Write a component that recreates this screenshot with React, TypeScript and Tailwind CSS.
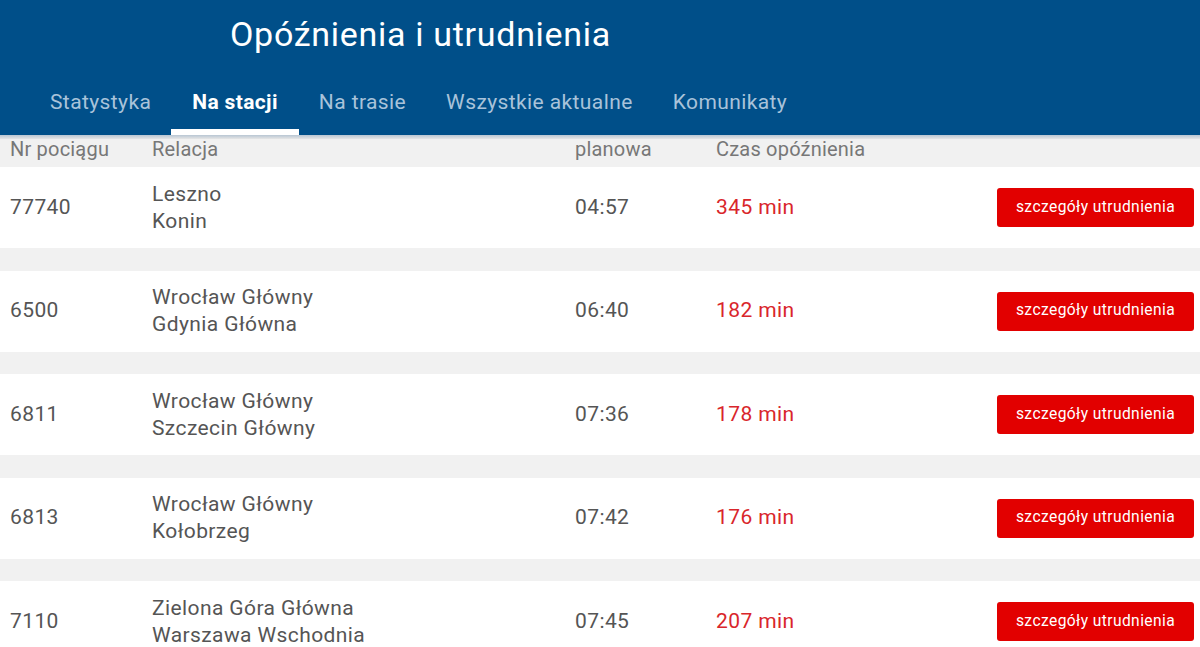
const tabs = ['Statystyka', 'Na stacji', 'Na trasie', 'Wszystkie aktualne', 'Komunikaty'];

const trains = [
  { nr: '77740', from: 'Leszno', to: 'Konin', time: '04:57', delay: 345 },
  { nr: '6500', from: 'Wrocław Główny', to: 'Gdynia Główna', time: '06:40', delay: 182 },
  { nr: '6811', from: 'Wrocław Główny', to: 'Szczecin Główny', time: '07:36', delay: 178 },
  { nr: '6813', from: 'Wrocław Główny', to: 'Kołobrzeg', time: '07:42', delay: 176 },
  { nr: '7110', from: 'Zielona Góra Główna', to: 'Warszawa Wschodnia', time: '07:45', delay: 207 },
];

export default function App() {
  return (
    <div className="h-[647px] w-[1200px] overflow-hidden bg-[#f1f1f1] font-['Roboto',sans-serif]">
      <header className="h-[135px] bg-[#004f89] text-white">
        <h1 className="pl-[230px] pt-[12px] text-[34px] leading-[44px] tracking-[0.7px]">Opóźnienia i utrudnienia</h1>
        <nav className="mt-[23px] flex pl-[30px]">
          {tabs.map((t) => {
            const active = t === 'Na stacji';
            return (
              <div
                key={t}
                className={
                  active
                    ? 'flex h-[56px] flex-col px-[21px] pt-[10px] text-[21px] font-bold tracking-[0.35px] text-white'
                    : 'flex h-[56px] flex-col px-[20px] pt-[10px] text-[21px] tracking-[0.4px] text-[#a9c3da]'
                }
              >
                <span className="leading-[26px]">{t}</span>
                {active && <span className="mt-auto h-[6px] -mx-[21px] bg-white" />}
              </div>
            );
          })}
        </nav>
      </header>
      <div className="h-[4px] bg-gradient-to-b from-[#b8c6d3] to-[#e6e6e6]" />
      <div className="flex h-[28px] items-start text-[20px] leading-[20px] tracking-[0.2px] text-[#777]">
        <div className="w-[152px] pl-[10px]">Nr pociągu</div>
        <div className="w-[423px]">Relacja</div>
        <div className="w-[141px]">planowa</div>
        <div>Czas opóźnienia</div>
      </div>
      <div className="flex flex-col gap-[22.5px]">
        {trains.map((r) => (
          <div key={r.nr} className="flex h-[81px] items-center bg-white text-[21px] tracking-[0.4px] text-[#555]">
            <div className="w-[152px] pl-[10px]">{r.nr}</div>
            <div className="w-[423px] leading-[27px]">
              <div>{r.from}</div>
              <div>{r.to}</div>
            </div>
            <div className="w-[141px]">{r.time}</div>
            <div className="flex-1 text-[#d9262b]">{r.delay} min</div>
            <button className="mr-[6px] h-[39px] w-[197px] rounded-[3px] bg-[#e20000] text-[15.6px] text-white">
              szczegóły utrudnienia
            </button>
          </div>
        ))}
      </div>
    </div>
  );
}
